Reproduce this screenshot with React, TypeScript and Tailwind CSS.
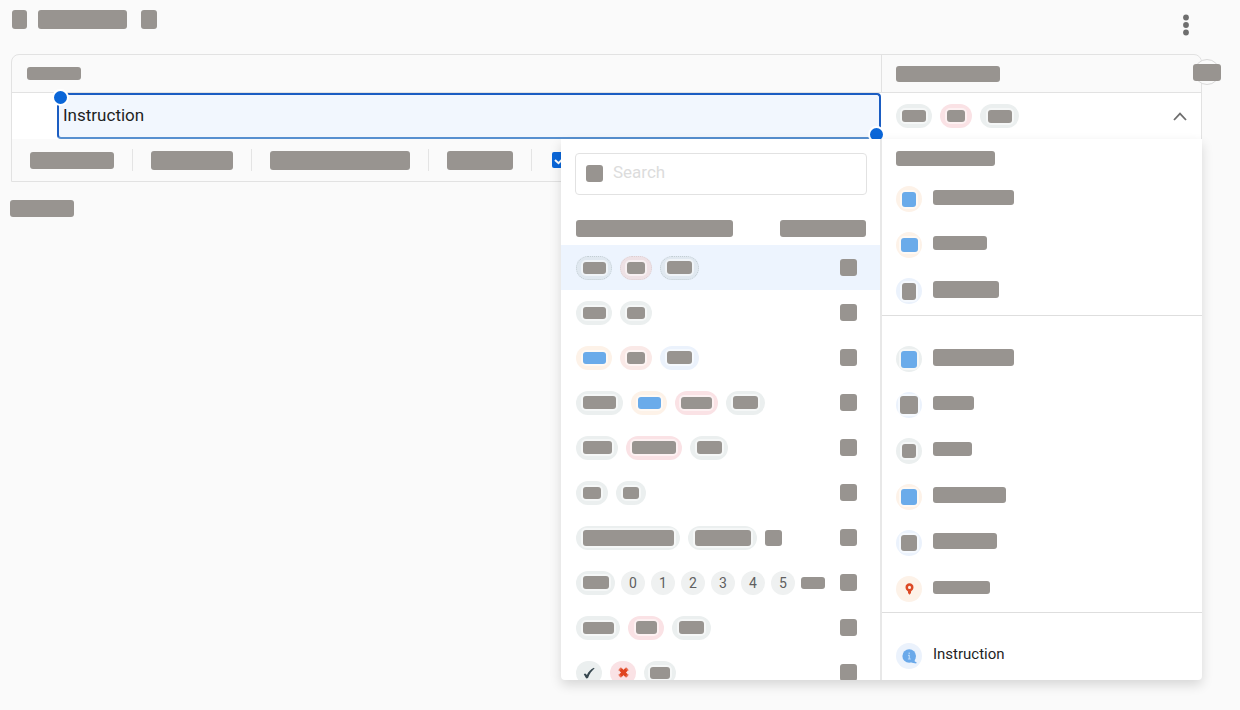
import { clsx } from 'clsx';

type Tone = 'gray' | 'pink' | 'orange' | 'blue' | 'peach';

interface Chip {
  chip?: string;
  bar?: string;
  tone?: Tone;
  accent?: boolean;
  text?: string;
  icon?: 'check' | 'cross';
}

interface ResponseType {
  icon: string;
  label: string;
  tone: Tone;
  accent?: boolean;
}

const TONES: Record<Tone, string> = {
  gray: 'bg-[#ebefef]',
  pink: 'bg-[#fae2e5]',
  peach: 'bg-[#fae9e7]',
  orange: 'bg-[#fdf2e8]',
  blue: 'bg-[#ebf2fc]',
};

const SELECTED: Chip[] = [
  { chip: 'w-9', bar: 'w-6 h-3' },
  { chip: 'w-8', bar: 'w-[18px] h-3', tone: 'pink' },
  { chip: 'w-[39px]', bar: 'w-6 h-[13px]' },
];

const RESPONSE_SETS: Chip[][] = [
  [
    { chip: 'w-9', bar: 'w-[23px] h-3' },
    { chip: 'w-8', bar: 'w-[18px] h-3', tone: 'peach' },
    { chip: 'w-[39px]', bar: 'w-[25px] h-[13px]' },
  ],
  [
    { chip: 'w-9', bar: 'w-[23px] h-3' },
    { chip: 'w-8', bar: 'w-[18px] h-3' },
  ],
  [
    { chip: 'w-9', bar: 'w-[23px] h-3', tone: 'orange', accent: true },
    { chip: 'w-8', bar: 'w-[18px] h-3', tone: 'peach' },
    { chip: 'w-[39px]', bar: 'w-[25px] h-[13px]', tone: 'blue' },
  ],
  [
    { chip: 'w-[47px]', bar: 'w-[33px] h-[13px]' },
    { chip: 'w-9', bar: 'w-[23px] h-3', tone: 'orange', accent: true },
    { chip: 'w-[43px]', bar: 'w-[31px] h-3', tone: 'pink' },
    { chip: 'w-[39px]', bar: 'w-[25px] h-[13px]' },
  ],
  [
    { chip: 'w-[42px]', bar: 'w-[29px] h-[13px]' },
    { chip: 'w-14', bar: 'w-11 h-[13px]', tone: 'pink' },
    { chip: 'w-[38px]', bar: 'w-[25px] h-[13px]' },
  ],
  [
    { chip: 'w-8', bar: 'w-[18px] h-3' },
    { chip: 'w-[30px]', bar: 'w-4 h-3' },
  ],
  [
    { chip: 'w-[104px]', bar: 'w-[91px] h-4' },
    { chip: 'w-[69px]', bar: 'w-14 h-4' },
    { bar: 'w-[17px] h-4' },
  ],
  [
    { chip: 'w-[39px]', bar: 'w-[26px] h-[13px]' },
    { text: '0' },
    { text: '1' },
    { text: '2' },
    { text: '3' },
    { text: '4' },
    { text: '5' },
    { bar: 'w-6 h-3' },
  ],
  [
    { chip: 'w-[44px]', bar: 'w-[31px] h-3' },
    { chip: 'w-9', bar: 'w-[21px] h-[13px]', tone: 'pink' },
    { chip: 'w-[39px]', bar: 'w-[25px] h-[13px]' },
  ],
  [
    { chip: 'w-[26px]', icon: 'check' },
    { chip: 'w-[26px]', icon: 'cross', tone: 'pink' },
    { chip: 'w-8', bar: 'w-5 h-3' },
  ],
];

const BASIC_TYPES: ResponseType[] = [
  { icon: 'w-[14px] h-[15px]', label: 'w-[81px] h-[15px]', tone: 'orange', accent: true },
  { icon: 'w-[17px] h-[14px]', label: 'w-[54px] h-[14px]', tone: 'orange', accent: true },
  { icon: 'w-[14px] h-[17px]', label: 'w-[66px] h-[17px]', tone: 'blue' },
];

const OTHER_TYPES: ResponseType[] = [
  { icon: 'w-4 h-[17px]', label: 'w-[81px] h-[17px]', tone: 'gray', accent: true },
  { icon: 'w-[18px] h-[18px]', label: 'w-[41px] h-[14px]', tone: 'blue' },
  { icon: 'w-[14px] h-[14px]', label: 'w-[39px] h-[14px]', tone: 'gray' },
  { icon: 'w-4 h-4', label: 'w-[73px] h-4', tone: 'orange', accent: true },
  { icon: 'w-4 h-4', label: 'w-16 h-4', tone: 'blue' },
];

function Bar({ size, accent, halo }: { size: string; accent?: boolean; halo?: boolean }) {
  return (
    <span
      className={clsx(
        'block shrink-0 rounded-[3px]',
        accent ? 'bg-[#6aabea]' : 'bg-[#989490]',
        halo && 'ring-2 ring-white/50',
        size,
      )}
    />
  );
}

function CheckMark() {
  return (
    <svg className="h-3 w-3" viewBox="0 0 12 12" aria-hidden="true">
      <path d="M0.8 7.2 C2 6 2.8 6.3 3.9 8 C5.6 4.6 7.6 2.4 11 0.8 L11.5 1.6 C8.6 4 6.6 7 5 11 C3.6 11.6 3 11.6 2.6 10.6 Z" fill="#37474f" />
    </svg>
  );
}

function CrossMark() {
  return (
    <svg className="h-[11px] w-[11px]" viewBox="0 0 11 11" aria-hidden="true">
      <path d="M2.4 2.2 L8.6 8.8 M8.6 2.2 L2.4 8.8" stroke="#e0431f" strokeWidth="3.6" />
      <path d="M0.6 3 L3.2 0.6 M7.8 0.6 L10.4 3 M0.6 8 L3.2 10.4 M7.8 10.4 L10.4 8" stroke="#e0431f" strokeWidth="1" />
    </svg>
  );
}

function ChipView({ item, highlighted }: { item: Chip; highlighted?: boolean }) {
  if (item.text) {
    return (
      <span className="flex h-6 w-6 items-center justify-center rounded-full bg-[#eff1f1] text-sm text-[#5f5f5f]">
        {item.text}
      </span>
    );
  }
  if (!item.chip) {
    return <Bar size={item.bar ?? ''} />;
  }
  return (
    <span
      className={clsx(
        'flex h-6 shrink-0 items-center justify-center rounded-full',
        item.chip,
        highlighted && 'border border-dotted',
        highlighted && (item.tone === 'peach' ? 'border-[#dccfd2] bg-[#eee1e5]' : 'border-[#c3ced4] bg-[#e0e8f0]'),
        !highlighted && TONES[item.tone ?? 'gray'],
      )}
    >
      {item.icon === 'check' && <CheckMark />}
      {item.icon === 'cross' && <CrossMark />}
      {item.bar && <Bar size={item.bar} accent={item.accent} halo />}
    </span>
  );
}

function TypeRow({ tone, icon, children }: { tone: Tone; icon: React.ReactNode; children: React.ReactNode }) {
  return (
    <button type="button" className="flex h-[46px] w-full items-center gap-[11px] px-[14px] text-left">
      <span className={clsx('flex h-[26px] w-[26px] items-center justify-center rounded-full', TONES[tone])}>
        {icon}
      </span>
      <span className="pb-1">{children}</span>
    </button>
  );
}

function TypeMenu() {
  return (
    <div className="w-[322px] shrink-0 border-l-2 border-[#e8e8e8]">
      <div className="h-[37px] px-[14px] pt-3">
        <Bar size="w-[99px] h-[15px]" />
      </div>
      <div>
        {BASIC_TYPES.map((type, index) => (
          <TypeRow key={index} tone={type.tone} icon={<Bar size={type.icon} accent={type.accent} halo />}>
            <Bar size={type.label} />
          </TypeRow>
        ))}
      </div>
      <div className="mt-px border-t border-[#dedede] pt-5">
        {OTHER_TYPES.map((type, index) => (
          <TypeRow key={index} tone={type.tone} icon={<Bar size={type.icon} accent={type.accent} halo />}>
            <Bar size={type.label} />
          </TypeRow>
        ))}
        <TypeRow
          tone="orange"
          icon={
            <svg className="h-3 w-[9px]" viewBox="0 0 9 12" aria-hidden="true">
              <path
                fillRule="evenodd"
                d="M4.5 0.3 C2.2 0.3 0.5 2 0.5 4.2 C0.5 6 1.6 7.4 3 8.4 L3 10 L4.5 11.7 L6 10 L6 8.4 C7.4 7.4 8.5 6 8.5 4.2 C8.5 2 6.8 0.3 4.5 0.3 Z M4.5 2.8 A1.5 1.6 0 1 1 4.5 6 A1.5 1.6 0 1 1 4.5 2.8 Z"
                fill="#dc4a26"
              />
            </svg>
          }
        >
          <Bar size="w-[57px] h-[13px]" />
        </TypeRow>
      </div>
      <div className="border-t border-[#dedede] pt-5">
        <TypeRow
          tone="blue"
          icon={
            <svg className="h-[15px] w-[15px]" viewBox="0 0 15 15" aria-hidden="true">
              <circle cx="7.2" cy="7" r="6.8" fill="#6aa9ea" />
              <path d="M8 12 L12.4 9.6 L12.8 12.6 L14.6 13.2 L14.2 14.6 L10 13.8 Z" fill="#6aa9ea" />
              <path d="M6 6.4 H7.3 V10 M5.9 10 H8.8 M7.2 3.6 V4.9" stroke="#b9d8f7" strokeWidth="1.2" fill="none" />
            </svg>
          }
        >
          <span className="block text-[15px] leading-5 text-[#1f1f1f]">Instruction</span>
        </TypeRow>
      </div>
    </div>
  );
}

function ResponseSets() {
  return (
    <div className="min-w-0 flex-1 overflow-hidden pt-[14px]">
      <label className="mr-[13px] ml-[14px] flex h-[42px] items-center gap-[10px] rounded border border-[#e2e2e2] pr-2 pb-[2px] pl-[10px]">
        <Bar size="w-[17px] h-[17px]" />
        <input
          type="search"
          aria-label="Search"
          placeholder="Search"
          className="min-w-0 flex-1 text-[17px] outline-none placeholder:text-[#dcdcdc]"
        />
      </label>
      <div className="mt-[25px] mb-2 flex justify-between pr-[14px] pl-[15px]">
        <Bar size="w-[157px] h-[17px]" />
        <Bar size="w-[86px] h-[17px]" />
      </div>
      <ul>
        {RESPONSE_SETS.map((chips, index) => (
          <li
            key={index}
            className={clsx('flex h-[45px] items-center justify-between pr-[23px] pl-[15px]', index === 0 && 'bg-[#edf4fe]')}
          >
            <button
              type="button"
              aria-label={`Response set ${index + 1}`}
              className={clsx('flex items-center', chips.length > 4 ? 'gap-1.5' : 'gap-2')}
            >
              {chips.map((chip, i) => (
                <ChipView key={i} item={chip} highlighted={index === 0} />
              ))}
            </button>
            <button type="button" aria-label={`Edit response set ${index + 1}`}>
              <Bar size="w-[17px] h-[17px]" />
            </button>
          </li>
        ))}
      </ul>
    </div>
  );
}

function Separator() {
  return <span className="h-[22px] w-px bg-[#e4e4e4]" />;
}

export default function App() {
  return (
    <div className="min-h-screen bg-[#fafafa] pr-[38px] pl-[11px] font-[Roboto,'Liberation_Sans',sans-serif] text-[#1f1f1f]">
      <header className="flex h-[54px] items-start pt-[10px] pr-3 pl-px">
        <Bar size="w-[15px] h-[19px]" />
        <span className="ml-[11px]">
          <Bar size="w-[89px] h-[19px]" />
        </span>
        <span className="ml-[14px]">
          <Bar size="w-4 h-[19px]" />
        </span>
        <button type="button" aria-label="More options" className="mt-1 ml-auto">
          <svg className="h-[22px] w-2" viewBox="0 0 8 22" fill="#6e6e6e" aria-hidden="true">
            <circle cx="4" cy="3.5" r="2.9" />
            <circle cx="4" cy="11" r="2.9" />
            <circle cx="4" cy="18.5" r="2.9" />
          </svg>
        </button>
      </header>

      <main>
        <section className="relative rounded-t-lg border border-[#e2e2e2]">
          {/* Column titles */}
          <div className="flex h-[38px] border-b border-[#e2e2e2]">
            <div className="flex flex-1 items-center pl-[15px]">
              <Bar size="w-[54px] h-[13px]" />
            </div>
            <div className="flex w-80 items-center border-l border-[#e2e2e2] pl-[14px]">
              <Bar size="w-[104px] h-4" />
            </div>
          </div>
          <button
            type="button"
            aria-label="Collapse"
            className="absolute top-1 -right-5 flex h-[26px] w-7 items-center justify-center"
          >
            <span className="absolute h-[26px] w-[26px] rounded-full border border-[#d9d9d9] bg-[#fafafa]" />
            <span className="relative">
              <Bar size="w-7 h-[17px]" />
            </span>
          </button>

          {/* Question row */}
          <div className="relative z-10">
            <div className="flex h-[46px] bg-white">
              <div className="relative ml-[45px] flex flex-1">
                <input
                  type="text"
                  aria-label="Question"
                  defaultValue="Instruction"
                  className="min-w-0 flex-1 rounded border-2 border-[#1b5dc2] border-b-[#5790d0] bg-[#f2f7fe] px-1 text-[17px] text-[#1f1f1f] outline-none"
                />
                <span className="absolute -top-1 -left-[5px] h-[17px] w-[17px] rounded-full border-2 border-white bg-[#0a66d8]" />
                <span className="absolute -right-1 -bottom-1 h-[17px] w-[17px] rounded-full border-2 border-white bg-[#0a66d8]" />
              </div>
              <button
                type="button"
                aria-label="Response type"
                aria-expanded="true"
                className="flex w-80 items-center gap-2 border-l border-white pr-[14px] pl-[14px]"
              >
                {SELECTED.map((chip, index) => (
                  <ChipView key={index} item={chip} />
                ))}
                <svg className="ml-auto h-[9px] w-[14px]" viewBox="0 0 14 9" fill="none" aria-hidden="true">
                  <path d="M1 8 L7 1.6 L13 8" stroke="#6e6e6e" strokeWidth="1.8" />
                </svg>
              </button>
            </div>

            {/* Response type menu */}
            <div className="absolute top-full -right-px flex max-h-[541px] w-[641px] overflow-hidden rounded-b bg-white shadow-[0_5px_12px_rgba(0,0,0,0.14)]">
              <ResponseSets />
              <TypeMenu />
            </div>
          </div>

          {/* Question settings */}
          <div className="flex h-[42px] items-center gap-[18px] pl-[18px]">
            <Bar size="w-[84px] h-[17px]" />
            <Separator />
            <Bar size="w-[82px] h-[19px]" />
            <Separator />
            <Bar size="w-[140px] h-[19px]" />
            <Separator />
            <Bar size="w-[66px] h-[19px]" />
            <Separator />
            <label className="ml-0.5 grid h-4 w-4">
              <input
                type="checkbox"
                aria-label="Required"
                defaultChecked
                className="col-start-1 row-start-1 h-4 w-4 appearance-none rounded-[2px] bg-[#0a66d8]"
              />
              <svg className="col-start-1 row-start-1 h-4 w-4" viewBox="0 0 16 16" fill="none" aria-hidden="true">
                <path d="M3 8 L6.5 11.2 L13 4.6" stroke="#fff" strokeWidth="2" />
              </svg>
            </label>
          </div>
        </section>

        <div className="-ml-px pt-[18px]">
          <Bar size="w-16 h-[17px]" />
        </div>
      </main>
    </div>
  );
}
